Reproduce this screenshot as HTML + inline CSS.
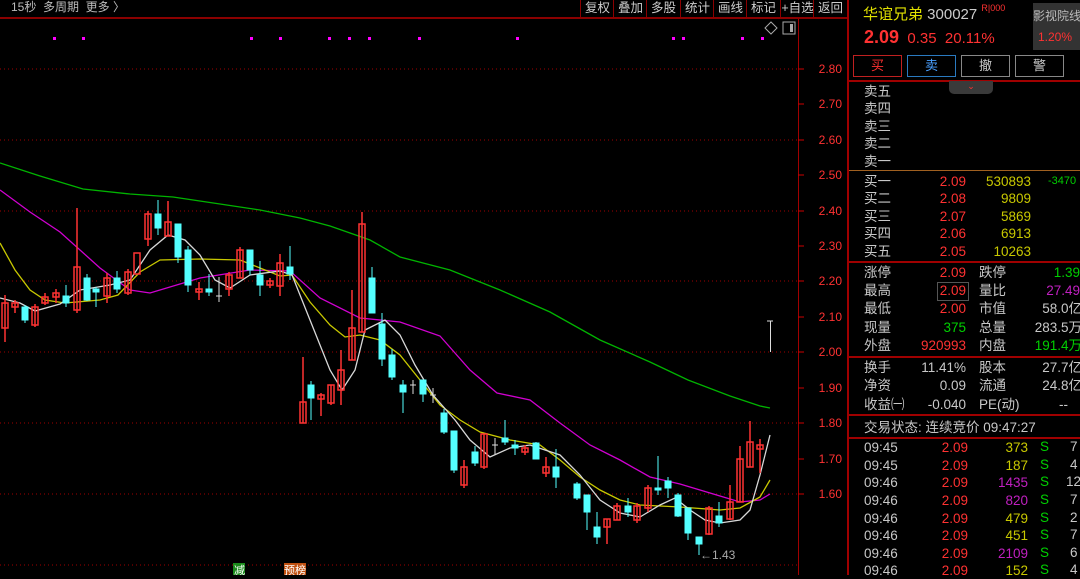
<!DOCTYPE html><html><head><meta charset="utf-8"><style>
body{margin:0;width:1080px;height:575px;background:#000;overflow:hidden;font-family:"Liberation Sans","Noto Sans CJK SC",sans-serif;position:relative}
.a{position:absolute;white-space:nowrap}
.btn{position:absolute;top:0;height:17px;border-left:1px solid #8b0000;color:#ccc;font-size:12.5px;line-height:16px;text-align:center;width:33px}
.r{color:#ff3232}.g{color:#00d000}.y{color:#c8c800}.m{color:#c020c0}.w{color:#c8c8c8}
.lbl{position:absolute;font-size:13.5px;color:#c8c8c8;line-height:17px;white-space:nowrap}
.num{position:absolute;font-size:13.5px;text-align:right;line-height:17px}
</style></head><body>
<div class="a" style="left:11px;top:0;font-size:12px;color:#bbb;line-height:15px">15秒 &nbsp;多周期 &nbsp;更多 〉</div>
<div style="position:absolute;left:0;top:17px;width:847px;height:2px;background:#8b0000"></div>
<div class="btn" style="left:580px">复权</div><div class="btn" style="left:613px">叠加</div><div class="btn" style="left:646px">多股</div><div class="btn" style="left:680px">统计</div><div class="btn" style="left:713px">画线</div><div class="btn" style="left:746px">标记</div><div class="btn" style="left:780px">+自选</div><div class="btn" style="left:813px">返回</div>
<svg style="position:absolute;left:0;top:0" width="847" height="575">
<g fill="#ff00ff"><rect x="53" y="37" width="3" height="3"/><rect x="82" y="37" width="3" height="3"/><rect x="250" y="37" width="3" height="3"/><rect x="279" y="37" width="3" height="3"/><rect x="328" y="37" width="3" height="3"/><rect x="348" y="37" width="3" height="3"/><rect x="368" y="37" width="3" height="3"/><rect x="418" y="37" width="3" height="3"/><rect x="516" y="37" width="3" height="3"/><rect x="672" y="37" width="3" height="3"/><rect x="682" y="37" width="3" height="3"/><rect x="741" y="37" width="3" height="3"/><rect x="761" y="37" width="3" height="3"/></g>
<path d="M771 22 l6 6 -6 6 -6 -6z" fill="none" stroke="#aaa"/><rect x="783" y="22" width="12" height="12" fill="none" stroke="#aaa"/><rect x="790" y="24" width="3" height="8" fill="#aaa"/>
<line x1="798.5" y1="19" x2="798.5" y2="575" stroke="#a00000"/>
<g stroke="#a00000" stroke-dasharray="1,3"><line x1="0" y1="69" x2="798" y2="69"/><line x1="0" y1="140" x2="798" y2="140"/><line x1="0" y1="211" x2="798" y2="211"/><line x1="0" y1="281" x2="798" y2="281"/><line x1="0" y1="352" x2="798" y2="352"/><line x1="0" y1="423" x2="798" y2="423"/><line x1="0" y1="494" x2="798" y2="494"/><line x1="0" y1="565" x2="798" y2="565"/></g>
<g stroke="#c00" ><line x1="798" y1="69" x2="804" y2="69"/><line x1="798" y1="104" x2="804" y2="104"/><line x1="798" y1="140" x2="804" y2="140"/><line x1="798" y1="175" x2="804" y2="175"/><line x1="798" y1="211" x2="804" y2="211"/><line x1="798" y1="246" x2="804" y2="246"/><line x1="798" y1="281" x2="804" y2="281"/><line x1="798" y1="317" x2="804" y2="317"/><line x1="798" y1="352" x2="804" y2="352"/><line x1="798" y1="388" x2="804" y2="388"/><line x1="798" y1="423" x2="804" y2="423"/><line x1="798" y1="459" x2="804" y2="459"/><line x1="798" y1="494" x2="804" y2="494"/></g>
<g fill="#ff3232" font-size="12" font-family="Liberation Sans" text-anchor="end"><text x="842" y="73">2.80</text><text x="842" y="108">2.70</text><text x="842" y="144">2.60</text><text x="842" y="179">2.50</text><text x="842" y="215">2.40</text><text x="842" y="250">2.30</text><text x="842" y="285">2.20</text><text x="842" y="321">2.10</text><text x="842" y="356">2.00</text><text x="842" y="392">1.90</text><text x="842" y="427">1.80</text><text x="842" y="463">1.70</text><text x="842" y="498">1.60</text></g>
<g fill="none" stroke-width="1.3">
<polyline stroke="#00b400" points="0,163 40,176 83,189 130,194 173,197 220,204 260,210 300,218 330,226 370,240 400,257 450,270 500,290 550,312 600,340 650,362 688,380 730,396 760,406 770,408"/>
<polyline stroke="#d000d0" points="0,190 30,212 60,232 100,268 130,290 150,293 200,278 250,270 290,271 320,298 360,318 400,322 440,336 470,370 497,393 530,400 560,423 590,445 620,460 650,477 680,484 720,496 740,502 760,500 770,494"/>
<polyline stroke="#c8c800" points="0,243 15,270 30,290 45,300 65,303 100,300 118,295 140,272 160,260 200,259 240,260 260,268 280,276 292,275 310,302 330,325 345,337 360,335 380,340 400,355 420,380 440,405 460,420 480,432 510,440 540,445 560,460 580,477 600,490 620,500 640,505 680,507 720,510 740,508 760,497 770,480"/>
<polyline stroke="#d8d8d8" points="0,298 20,303 35,311 60,304 80,290 110,285 130,280 150,250 168,235 185,240 200,255 215,280 230,288 250,275 280,271 292,275 310,320 330,370 342,390 355,370 365,330 385,320 400,335 415,365 433,395 455,420 470,440 490,457 510,448 530,445 560,455 580,475 600,500 620,513 640,517 660,505 675,498 690,510 705,520 720,523 740,520 750,510 760,475 770,435"/>
</g>
<g stroke="#ff3232" fill="none" stroke-width="1.5">
<line x1="5" y1="295" x2="5" y2="342"/><rect x="2" y="303" width="6" height="25"/>
<line x1="15" y1="300" x2="15" y2="313"/><rect x="12" y="303" width="6" height="4"/>
<line x1="35" y1="304" x2="35" y2="327"/><rect x="32" y="307" width="6" height="18"/>
<line x1="45" y1="293" x2="45" y2="305"/><rect x="42" y="297" width="6" height="6"/>
<line x1="56" y1="289" x2="56" y2="303"/><rect x="53" y="293" width="6" height="4"/>
<line x1="77" y1="208" x2="77" y2="313"/><rect x="74" y="267" width="6" height="43"/>
<line x1="107" y1="273" x2="107" y2="303"/><rect x="104" y="278" width="6" height="18"/>
<line x1="128" y1="269" x2="128" y2="295"/><rect x="125" y="272" width="6" height="21"/>
<rect x="134" y="253" width="6" height="21"/>
<line x1="148" y1="211" x2="148" y2="246"/><rect x="145" y="214" width="6" height="25"/>
<line x1="168" y1="201" x2="168" y2="236"/><rect x="165" y="222" width="6" height="14"/>
<line x1="199" y1="282" x2="199" y2="300"/><rect x="196" y="289" width="6" height="3"/>
<line x1="229" y1="272" x2="229" y2="296"/><rect x="226" y="275" width="6" height="14"/>
<line x1="240" y1="247" x2="240" y2="278"/><rect x="237" y="250" width="6" height="28"/>
<line x1="270" y1="278" x2="270" y2="288"/><rect x="267" y="281" width="6" height="4"/>
<line x1="280" y1="254" x2="280" y2="296"/><rect x="277" y="263" width="6" height="23"/>
<line x1="303" y1="357" x2="303" y2="423"/><rect x="300" y="402" width="6" height="21"/>
<line x1="321" y1="393" x2="321" y2="416"/><rect x="318" y="395" width="6" height="4"/>
<line x1="331" y1="385" x2="331" y2="405"/><rect x="328" y="385" width="6" height="18"/>
<line x1="341" y1="350" x2="341" y2="405"/><rect x="338" y="370" width="6" height="20"/>
<line x1="352" y1="290" x2="352" y2="360"/><rect x="349" y="328" width="6" height="32"/>
<line x1="362" y1="212" x2="362" y2="332"/><rect x="359" y="224" width="6" height="108"/>
<line x1="464" y1="460" x2="464" y2="488"/><rect x="461" y="467" width="6" height="18"/>
<line x1="484" y1="434" x2="484" y2="469"/><rect x="481" y="434" width="6" height="33"/>
<line x1="525" y1="445" x2="525" y2="455"/><rect x="522" y="448" width="6" height="4"/>
<line x1="546" y1="457" x2="546" y2="477"/><rect x="543" y="467" width="6" height="6"/>
<line x1="607" y1="519" x2="607" y2="544"/><rect x="604" y="519" width="6" height="8"/>
<line x1="617" y1="503" x2="617" y2="520"/><rect x="614" y="506" width="6" height="14"/>
<line x1="637" y1="503" x2="637" y2="523"/><rect x="634" y="506" width="6" height="14"/>
<line x1="648" y1="485" x2="648" y2="512"/><rect x="645" y="488" width="6" height="20"/>
<line x1="709" y1="506" x2="709" y2="535"/><rect x="706" y="508" width="6" height="26"/>
<line x1="730" y1="485" x2="730" y2="520"/><rect x="727" y="502" width="6" height="17"/>
<line x1="740" y1="446" x2="740" y2="502"/><rect x="737" y="459" width="6" height="43"/>
<line x1="750" y1="421" x2="750" y2="467"/><rect x="747" y="442" width="6" height="25"/>
<line x1="760" y1="439" x2="760" y2="473"/><rect x="757" y="445" width="6" height="4"/>
</g>
<g stroke="#54ffff" fill="#54ffff">
<line x1="25" y1="305" x2="25" y2="323"/><rect x="22" y="307" width="6" height="13"/>
<line x1="66" y1="285" x2="66" y2="307"/><rect x="63" y="296" width="6" height="7"/>
<line x1="87" y1="274" x2="87" y2="301"/><rect x="84" y="278" width="6" height="22"/>
<line x1="96" y1="287" x2="96" y2="307"/><rect x="93" y="289" width="6" height="3"/>
<line x1="117" y1="271" x2="117" y2="293"/><rect x="114" y="278" width="6" height="11"/>
<line x1="158" y1="200" x2="158" y2="235"/><rect x="155" y="214" width="6" height="14"/>
<line x1="178" y1="224" x2="178" y2="263"/><rect x="175" y="224" width="6" height="33"/>
<line x1="188" y1="246" x2="188" y2="292"/><rect x="185" y="250" width="6" height="35"/>
<line x1="209" y1="274" x2="209" y2="296"/><rect x="206" y="289" width="6" height="3"/>
<line x1="250" y1="250" x2="250" y2="275"/><rect x="247" y="250" width="6" height="20"/>
<line x1="260" y1="261" x2="260" y2="296"/><rect x="257" y="275" width="6" height="10"/>
<line x1="290" y1="246" x2="290" y2="280"/><rect x="287" y="267" width="6" height="7"/>
<line x1="311" y1="381" x2="311" y2="420"/><rect x="308" y="385" width="6" height="13"/>
<line x1="372" y1="267" x2="372" y2="313"/><rect x="369" y="278" width="6" height="35"/>
<line x1="382" y1="313" x2="382" y2="366"/><rect x="379" y="324" width="6" height="35"/>
<line x1="392" y1="349" x2="392" y2="380"/><rect x="389" y="355" width="6" height="22"/>
<line x1="403" y1="380" x2="403" y2="413"/><rect x="400" y="385" width="6" height="7"/>
<line x1="423" y1="380" x2="423" y2="402"/><rect x="420" y="380" width="6" height="14"/>
<line x1="444" y1="409" x2="444" y2="434"/><rect x="441" y="413" width="6" height="19"/>
<line x1="454" y1="431" x2="454" y2="473"/><rect x="451" y="431" width="6" height="39"/>
<line x1="475" y1="446" x2="475" y2="466"/><rect x="472" y="452" width="6" height="11"/>
<line x1="505" y1="420" x2="505" y2="445"/><rect x="502" y="438" width="6" height="4"/>
<line x1="515" y1="440" x2="515" y2="455"/><rect x="512" y="445" width="6" height="3"/>
<line x1="536" y1="442" x2="536" y2="459"/><rect x="533" y="443" width="6" height="16"/>
<line x1="556" y1="449" x2="556" y2="488"/><rect x="553" y="467" width="6" height="10"/>
<line x1="577" y1="482" x2="577" y2="500"/><rect x="574" y="484" width="6" height="14"/>
<line x1="587" y1="495" x2="587" y2="530"/><rect x="584" y="495" width="6" height="17"/>
<line x1="597" y1="512" x2="597" y2="544"/><rect x="594" y="527" width="6" height="10"/>
<line x1="628" y1="498" x2="628" y2="517"/><rect x="625" y="506" width="6" height="6"/>
<line x1="658" y1="456" x2="658" y2="495"/><rect x="655" y="488" width="6" height="2"/>
<line x1="668" y1="477" x2="668" y2="498"/><rect x="665" y="481" width="6" height="7"/>
<line x1="678" y1="493" x2="678" y2="517"/><rect x="675" y="495" width="6" height="21"/>
<line x1="688" y1="508" x2="688" y2="540"/><rect x="685" y="508" width="6" height="25"/>
<line x1="699" y1="537" x2="699" y2="555"/><rect x="696" y="537" width="6" height="7"/>
<line x1="719" y1="502" x2="719" y2="527"/><rect x="716" y="516" width="6" height="7"/>
</g>
<g stroke="#ddd"><line x1="219" y1="277" x2="219" y2="302"/><line x1="216" y1="296" x2="222" y2="296"/><line x1="413" y1="380" x2="413" y2="394"/><line x1="410" y1="385" x2="416" y2="385"/><line x1="433" y1="388" x2="433" y2="403"/><line x1="430" y1="395" x2="436" y2="395"/><line x1="495" y1="438" x2="495" y2="455"/><line x1="492" y1="445" x2="498" y2="445"/><line x1="770.5" y1="321" x2="770.5" y2="352"/><line x1="767" y1="321" x2="773" y2="321"/></g>
<text x="700" y="559" fill="#aaa" font-size="12" font-family="Liberation Sans">←1.43</text>
<rect x="233" y="563" width="12" height="12" fill="#1a8a1a"/><text x="234" y="574" fill="#fff" font-size="11" font-family="Noto Sans CJK SC">减</text>
<rect x="284" y="563" width="22" height="12" fill="#c05010"/><text x="284" y="574" fill="#fff" font-size="11" font-family="Noto Sans CJK SC">预榜</text>
</svg>
<div style="position:absolute;left:847px;top:0;width:2px;height:575px;background:#a00000"></div>
<div class="a" style="left:863px;top:3px;font-size:15px;color:#e0e000">华谊兄弟 <span style="color:#ccc">300027</span> <span style="color:#ff3232;font-size:9px;vertical-align:top">R|000</span></div>
<div class="a" style="left:864px;top:27px;font-size:15px;color:#ff3232"><b style="font-size:18px">2.09</b>&nbsp; 0.35 &nbsp;20.11%</div>
<div style="position:absolute;left:1033px;top:3px;width:47px;height:47px;background:#333"></div>
<div class="a" style="left:1033px;top:7px;font-size:12px;color:#bbb">影视院线</div>
<div class="a" style="left:1038px;top:30px;font-size:12px;color:#ff3232">1.20%</div>
<div style="position:absolute;left:853px;top:55px;width:47px;height:20px;border:1px solid #c02020;color:#ff3232;font-size:13px;text-align:center;line-height:20px">买</div>
<div style="position:absolute;left:907px;top:55px;width:47px;height:20px;border:1px solid #2a7ac0;color:#4aa0ff;font-size:13px;text-align:center;line-height:20px">卖</div>
<div style="position:absolute;left:961px;top:55px;width:47px;height:20px;border:1px solid #888;color:#ccc;font-size:13px;text-align:center;line-height:20px">撤</div>
<div style="position:absolute;left:1015px;top:55px;width:47px;height:20px;border:1px solid #888;color:#ccc;font-size:13px;text-align:center;line-height:20px">警</div>
<div style="position:absolute;left:849px;top:80px;width:231px;height:2px;background:#a00000"></div>
<div style="position:absolute;left:949px;top:81px;width:44px;height:13px;background:#3a3a3a;border-radius:0 0 5px 5px;color:#ff3232;font-size:9px;text-align:center;line-height:10px">⌄</div>
<div class="lbl" style="left:864px;top:83px">卖五</div><div class="lbl" style="left:864px;top:100px">卖四</div><div class="lbl" style="left:864px;top:118px">卖三</div><div class="lbl" style="left:864px;top:135px">卖二</div><div class="lbl" style="left:864px;top:153px">卖一</div>
<div style="position:absolute;left:849px;top:170px;width:231px;height:1px;background:#a06020"></div>
<div class="lbl" style="left:864px;top:173px">买一</div><div class="num r" style="left:900px;width:66px;top:173px">2.09</div><div class="num y" style="left:960px;width:71px;top:173px">530893</div><div class="a g" style="left:1048px;top:175px;font-size:11px">-3470</div>
<div class="lbl" style="left:864px;top:190px">买二</div><div class="num r" style="left:900px;width:66px;top:190px">2.08</div><div class="num y" style="left:960px;width:71px;top:190px">9809</div>
<div class="lbl" style="left:864px;top:208px">买三</div><div class="num r" style="left:900px;width:66px;top:208px">2.07</div><div class="num y" style="left:960px;width:71px;top:208px">5869</div>
<div class="lbl" style="left:864px;top:225px">买四</div><div class="num r" style="left:900px;width:66px;top:225px">2.06</div><div class="num y" style="left:960px;width:71px;top:225px">6913</div>
<div class="lbl" style="left:864px;top:243px">买五</div><div class="num r" style="left:900px;width:66px;top:243px">2.05</div><div class="num y" style="left:960px;width:71px;top:243px">10263</div>
<div style="position:absolute;left:849px;top:261px;width:231px;height:2px;background:#a00000"></div>
<div class="lbl" style="left:864px;top:264px">涨停</div><div class="num r" style="left:900px;width:66px;top:264px">2.09</div><div class="lbl" style="left:979px;top:264px">跌停</div><div class="num g" style="left:1000px;width:80px;top:264px">1.39</div>
<div class="lbl" style="left:864px;top:282px">最高</div><div style="position:absolute;left:937px;top:282px;width:30px;height:17px;border:1px solid #555"></div><div class="num r" style="left:900px;width:66px;top:282px">2.09</div><div class="lbl" style="left:979px;top:282px">量比</div><div class="num m" style="left:1000px;width:80px;top:282px">27.49</div>
<div class="lbl" style="left:864px;top:300px">最低</div><div class="num r" style="left:900px;width:66px;top:300px">2.00</div><div class="lbl" style="left:979px;top:300px">市值</div><div class="num w" style="left:1000px;width:82px;top:300px">58.0亿</div>
<div class="lbl" style="left:864px;top:319px">现量</div><div class="num g" style="left:900px;width:66px;top:319px">375</div><div class="lbl" style="left:979px;top:319px">总量</div><div class="num w" style="left:1000px;width:82px;top:319px">283.5万</div>
<div class="lbl" style="left:864px;top:337px">外盘</div><div class="num r" style="left:900px;width:66px;top:337px">920993</div><div class="lbl" style="left:979px;top:337px">内盘</div><div class="num g" style="left:1000px;width:82px;top:337px">191.4万</div>
<div style="position:absolute;left:849px;top:356px;width:231px;height:2px;background:#a00000"></div>
<div class="lbl" style="left:864px;top:359px">换手</div><div class="num w" style="left:900px;width:66px;top:359px">11.41%</div><div class="lbl" style="left:979px;top:359px">股本</div><div class="num w" style="left:1000px;width:82px;top:359px">27.7亿</div>
<div class="lbl" style="left:864px;top:377px">净资</div><div class="num w" style="left:900px;width:66px;top:377px">0.09</div><div class="lbl" style="left:979px;top:377px">流通</div><div class="num w" style="left:1000px;width:82px;top:377px">24.8亿</div>
<div class="lbl" style="left:864px;top:396px">收益㈠</div><div class="num w" style="left:900px;width:66px;top:396px">-0.040</div><div class="lbl" style="left:979px;top:396px">PE(动)</div><div class="num w" style="left:1000px;width:68px;top:396px">--</div>
<div style="position:absolute;left:849px;top:414px;width:231px;height:2px;background:#a00000"></div>
<div class="lbl" style="left:864px;top:419px">交易状态: 连续竞价 09:47:27</div>
<div style="position:absolute;left:849px;top:437px;width:231px;height:2px;background:#a00000"></div>
<div class="lbl" style="left:864px;top:439px">09:45</div><div class="num r" style="left:900px;width:68px;top:439px">2.09</div><div class="num y" style="left:980px;width:48px;top:439px">373</div><div class="a g" style="left:1040px;top:439px;font-size:13.5px">S</div><div class="a w" style="left:1070px;top:439px;font-size:13.5px">7</div>
<div class="lbl" style="left:864px;top:457px">09:45</div><div class="num r" style="left:900px;width:68px;top:457px">2.09</div><div class="num y" style="left:980px;width:48px;top:457px">187</div><div class="a g" style="left:1040px;top:457px;font-size:13.5px">S</div><div class="a w" style="left:1070px;top:457px;font-size:13.5px">4</div>
<div class="lbl" style="left:864px;top:474px">09:46</div><div class="num r" style="left:900px;width:68px;top:474px">2.09</div><div class="num m" style="left:980px;width:48px;top:474px">1435</div><div class="a g" style="left:1040px;top:474px;font-size:13.5px">S</div><div class="a w" style="left:1066px;top:474px;font-size:13.5px">12</div>
<div class="lbl" style="left:864px;top:492px">09:46</div><div class="num r" style="left:900px;width:68px;top:492px">2.09</div><div class="num m" style="left:980px;width:48px;top:492px">820</div><div class="a g" style="left:1040px;top:492px;font-size:13.5px">S</div><div class="a w" style="left:1070px;top:492px;font-size:13.5px">7</div>
<div class="lbl" style="left:864px;top:510px">09:46</div><div class="num r" style="left:900px;width:68px;top:510px">2.09</div><div class="num y" style="left:980px;width:48px;top:510px">479</div><div class="a g" style="left:1040px;top:510px;font-size:13.5px">S</div><div class="a w" style="left:1070px;top:510px;font-size:13.5px">2</div>
<div class="lbl" style="left:864px;top:527px">09:46</div><div class="num r" style="left:900px;width:68px;top:527px">2.09</div><div class="num y" style="left:980px;width:48px;top:527px">451</div><div class="a g" style="left:1040px;top:527px;font-size:13.5px">S</div><div class="a w" style="left:1070px;top:527px;font-size:13.5px">7</div>
<div class="lbl" style="left:864px;top:545px">09:46</div><div class="num r" style="left:900px;width:68px;top:545px">2.09</div><div class="num m" style="left:980px;width:48px;top:545px">2109</div><div class="a g" style="left:1040px;top:545px;font-size:13.5px">S</div><div class="a w" style="left:1070px;top:545px;font-size:13.5px">6</div>
<div class="lbl" style="left:864px;top:562px">09:46</div><div class="num r" style="left:900px;width:68px;top:562px">2.09</div><div class="num y" style="left:980px;width:48px;top:562px">152</div><div class="a g" style="left:1040px;top:562px;font-size:13.5px">S</div><div class="a w" style="left:1070px;top:562px;font-size:13.5px">4</div>
</body></html>
